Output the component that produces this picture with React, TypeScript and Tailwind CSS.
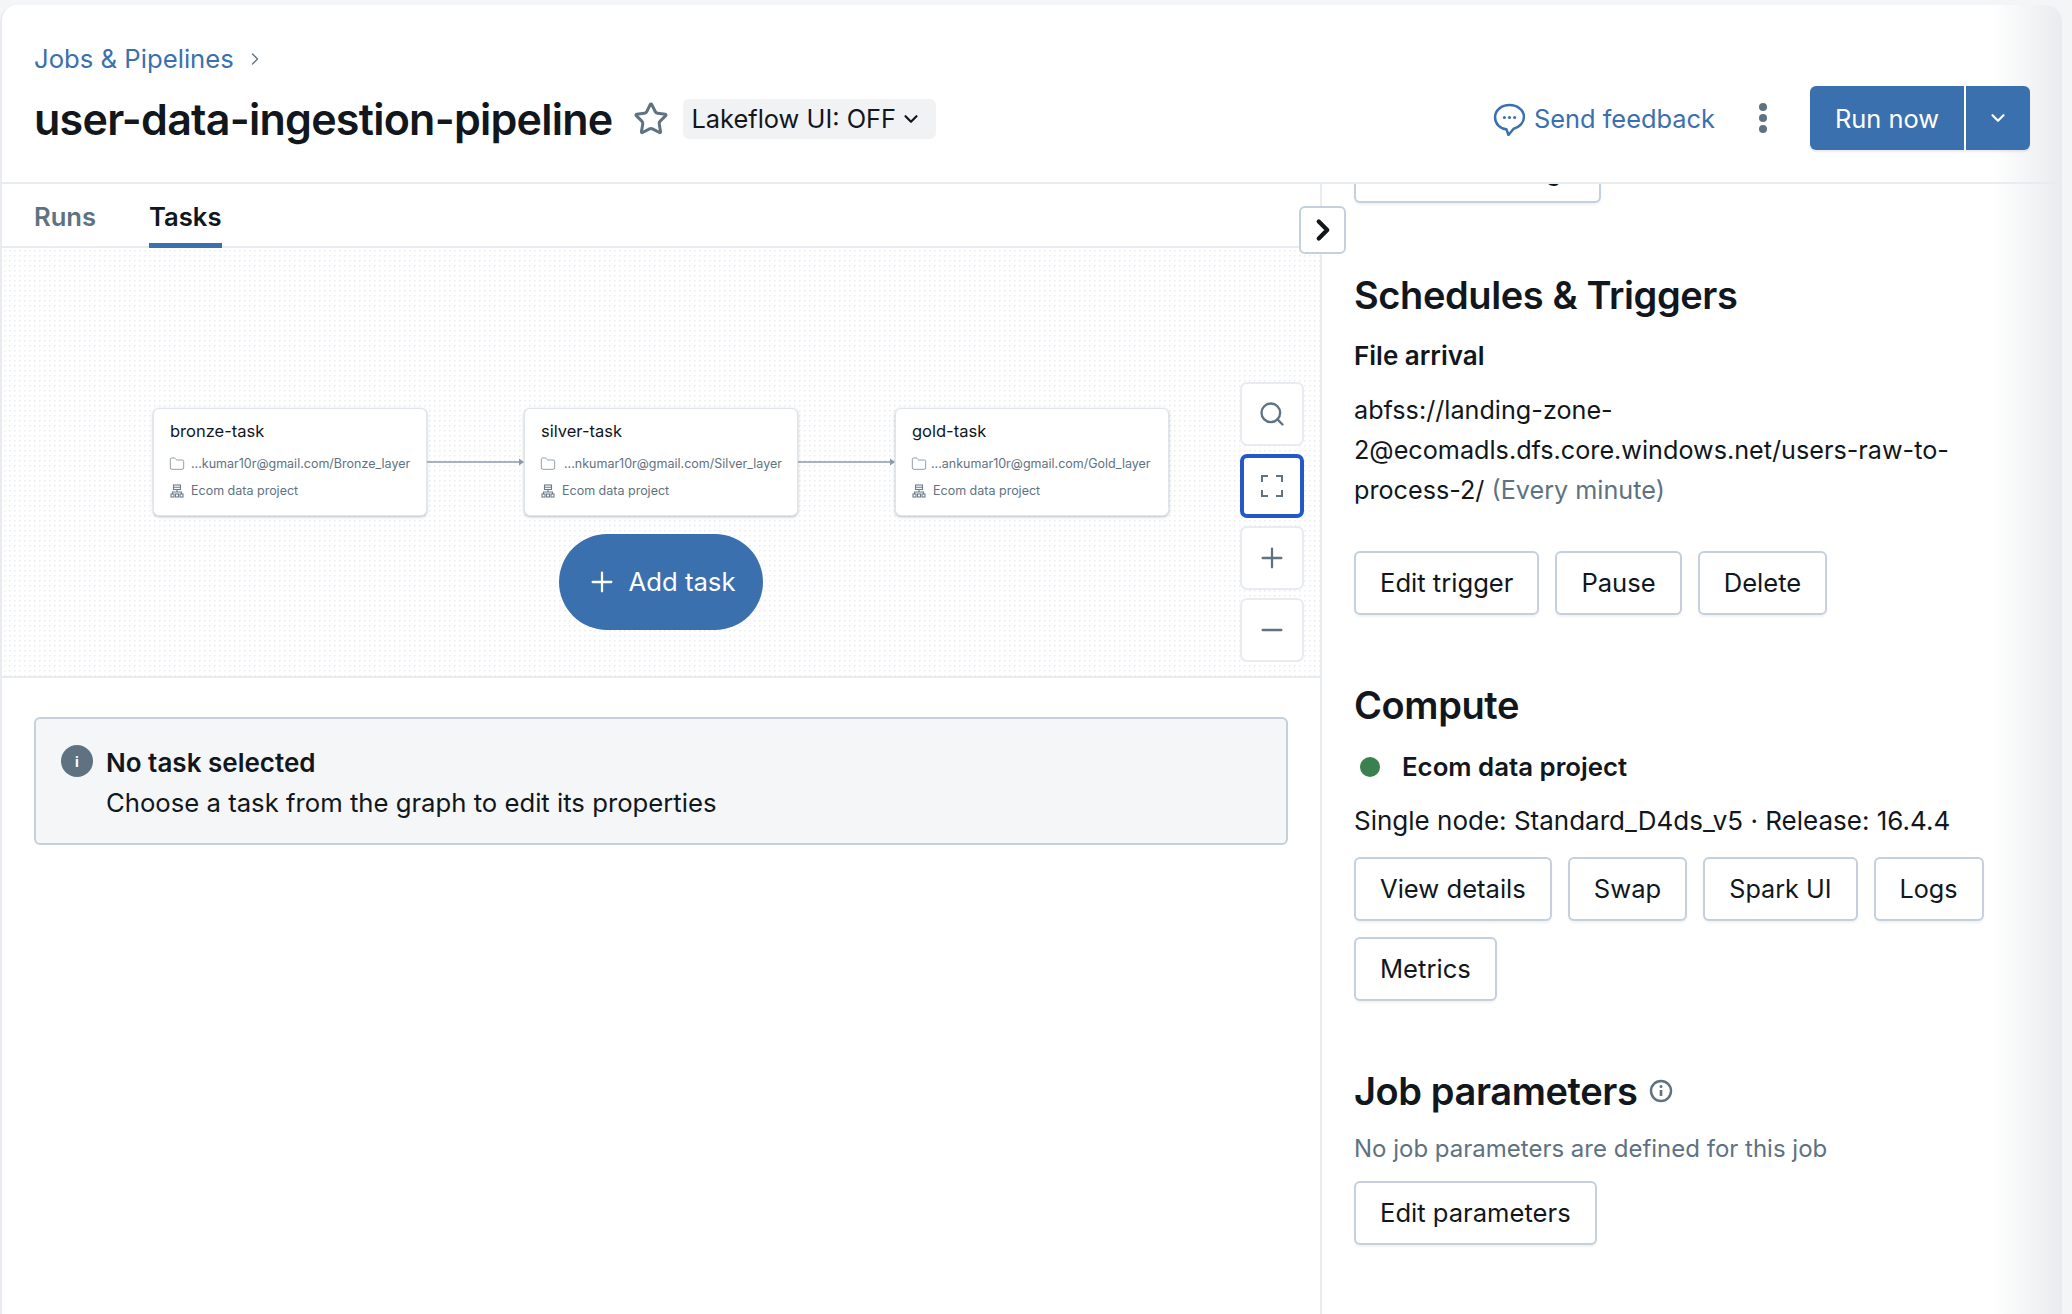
import React from "react";
import { ChevronRight, ChevronDown, Star, Folder, Plus, Minus, Search } from "lucide-react";

const Btn = ({ children, className = "" }: { children: React.ReactNode; className?: string }) => (
  <button className={"h-[64px] px-[24px] rounded-[6px] border-2 border-[#c4d0dc] bg-white text-[25.6px] leading-[30px] text-[#11171c] shadow-[0_2px_2px_rgba(0,0,0,0.05)] whitespace-nowrap " + className}>
    {children}
  </button>
);

const ClusterIcon = () => (
  <svg width="14" height="14" viewBox="0 0 14 14" fill="none" stroke="#6b7c8c" strokeWidth="1.1" className="shrink-0">
    <rect x="3.5" y="1" width="7" height="4.5" />
    <path d="M3.5 3.2h7M7 5.5v2.500M2.500 10V8h9v2" />
    <rect x="1" y="10" width="3" height="3" />
    <rect x="5.500" y="10" width="3" height="3" />
    <rect x="10" y="10" width="3" height="3" />
  </svg>
);

const TaskNode = ({ name, path, left, gap }: { name: string; path: string; left: number; gap: string }) => (
  <div
    className="absolute top-[160px] w-[274px] h-[108px] bg-white rounded-[6px] border border-[#dfe5ea] shadow-[0_1px_3px_rgba(95,114,129,0.45)] px-[16px] pt-[11px]"
    style={{ left }}
  >
    <div className="text-[16.5px] leading-[22px] text-[#11171c]">{name}</div>
    <div className={"flex items-center mt-[12px] h-[20px] -ml-[1px] " + gap}>
      <Folder size={16} strokeWidth={1.1} color="#6b7c8c" className="shrink-0" />
      <span className="text-[12.5px] text-[#5f7281] whitespace-nowrap">{path}</span>
    </div>
    <div className="flex items-center gap-[7px] mt-[7px] h-[20px]">
      <ClusterIcon />
      <span className="text-[12.5px] text-[#5f7281] whitespace-nowrap">Ecom data project</span>
    </div>
  </div>
);

const Arrow = ({ left }: { left: number }) => (
  <svg className="absolute top-[209px]" style={{ left }} width="98" height="10" viewBox="0 0 98 10">
    <path d="M0 5H94" stroke="#8a9bab" strokeWidth="1.5" />
    <path d="M92 1.500L97 5L92 8.500Z" fill="#8a9bab" />
  </svg>
);

const ZoomBtn = ({ children, active }: { children: React.ReactNode; active?: boolean }) => (
  <div
    className={
      "w-[64px] h-[64px] rounded-[7px] bg-white flex items-center justify-center " +
      (active ? "border-4 border-[#2458c6]" : "border-2 border-[#e8ecf0]")
    }
  >
    {children}
  </div>
);

export default function App() {
  return (
    <div className="relative w-[2072px] h-[1314px] overflow-hidden bg-[#f3f5f7] pt-[5px] font-['Inter',sans-serif] text-[#11171c]">
      <div className="relative h-[1309px] w-[2062px] bg-white rounded-t-[16px] flex flex-col overflow-hidden border-l-2 border-[#e8ecf0]">
        {/* Header */}
        <header className="h-[179px] shrink-0 border-b-2 border-[#e8ecf0] pl-[32px] pr-[32px] flex flex-col pt-[38px]">
          <div className="flex items-center gap-[11px] h-[32px] text-[25.7px] leading-[32px] text-[#3b70ae]">
            <span>Jobs &amp; Pipelines</span>
            <ChevronRight size={20} strokeWidth={1.6} color="#5f7281" />
          </div>
          <div className="flex items-center h-[64px] mt-[12px]">
            <h1 className="text-[43px] leading-[56px] font-semibold tracking-[-0.75px] text-[#11171c] whitespace-nowrap">user-data-ingestion-pipeline</h1>
            <Star size={36} strokeWidth={2} color="#5f7281" className="ml-[21px]" />
            <div className="ml-[14px] h-[40px] pl-[8px] pr-[14px] rounded-[6px] bg-[#f1f2f4] flex items-center gap-[4px] text-[25.4px] text-[#11171c] whitespace-nowrap">
              Lakeflow UI: OFF
              <ChevronDown size={22} strokeWidth={2.4} />
            </div>
            <div className="ml-auto flex items-center relative z-10">
              <svg width="33" height="33" viewBox="0 0 32 32" fill="none" className="mr-[8px]">
                <path d="M16 2C8.300 2 2 7 2 14c0 6.300 5 11 11 11.500L15 31l5-6c5.800-1.500 10-6 10-11.500C30 7 23.700 2 16 2Z" stroke="#3b70ae" strokeWidth="2.4" strokeLinejoin="round" />
                <circle cx="11" cy="14" r="1.500" fill="#3b70ae" />
                <circle cx="16" cy="14" r="1.500" fill="#3b70ae" />
                <circle cx="21" cy="14" r="1.500" fill="#3b70ae" />
              </svg>
              <span className="text-[25.4px] text-[#3b70ae] whitespace-nowrap">Send feedback</span>
              <svg width="10" height="30" viewBox="0 0 10 30" className="ml-[43px] mb-[2px]">
                <circle cx="5" cy="4" r="4" fill="#5f7281" />
                <circle cx="5" cy="15" r="4" fill="#5f7281" />
                <circle cx="5" cy="26" r="4" fill="#5f7281" />
              </svg>
              <div className="ml-[42px] mb-[2px] flex h-[64px] rounded-[6px] overflow-hidden bg-[#3b70ae] text-white shadow-[0_2px_2px_rgba(0,0,0,0.08)]">
                <div className="w-[156px] flex items-center justify-center pt-[2px] text-[25.4px] border-r-2 border-white">Run now</div>
                <div className="w-[64px] flex items-center justify-center"><ChevronDown size={22} strokeWidth={2.4} /></div>
              </div>
            </div>
          </div>
        </header>

        <div className="flex flex-1 min-h-0">
          {/* Left */}
          <div className="w-[1320px] shrink-0 border-r-2 border-[#e8ecf0] relative flex flex-col">
            <div className="h-[64px] shrink-0 flex gap-[53px] pl-[32px] border-b-2 border-[#e8ecf0] text-[25.6px] font-semibold">
              <div className="pt-[14px] text-[#5f7281]">Runs</div>
              <div className="pt-[14px] h-[64px] border-b-[5px] border-[#3b70ae] text-[#11171c]">Tasks</div>
            </div>
            <div className="relative h-[430px] shrink-0 border-b-2 border-[#e8ecf0] bg-[radial-gradient(#eef0f3_1px,transparent_1px)] bg-[size:5px_5px]">
              <TaskNode name="bronze-task" path="...kumar10r@gmail.com/Bronze_layer" left={151} gap="gap-[6px]" />
              <Arrow left={425} />
              <TaskNode name="silver-task" path="...nkumar10r@gmail.com/Silver_layer" left={522} gap="gap-[8px]" />
              <Arrow left={796} />
              <TaskNode name="gold-task" path="...ankumar10r@gmail.com/Gold_layer" left={893} gap="gap-[4px]" />
              <button className="absolute left-[557px] top-[286px] w-[204px] h-[96px] rounded-full bg-[#3b70ae] text-white text-[25.7px] flex items-center justify-center gap-[10px]">
                <Plus size={32} strokeWidth={1.7} />
                Add task
              </button>
              <div className="absolute left-[1238px] top-[134px] flex flex-col gap-[8px]">
                <ZoomBtn><Search size={28} strokeWidth={2} color="#5f7281" /></ZoomBtn>
                <ZoomBtn active>
                  <svg width="22" height="22" viewBox="0 0 22 22" fill="none" stroke="#5f7281" strokeWidth="2">
                    <path d="M1 7V1h6M15 1h6v6M21 15v6h-6M7 21H1v-6" />
                  </svg>
                </ZoomBtn>
                <ZoomBtn><Plus size={32} strokeWidth={1.7} color="#5f7281" /></ZoomBtn>
                <ZoomBtn><Minus size={32} strokeWidth={1.7} color="#5f7281" /></ZoomBtn>
              </div>
            </div>
            <div className="mx-[32px] mt-[39px] h-[128px] bg-[#f5f6f8] border-2 border-[#c4d0dc] rounded-[6px] flex pl-[25px] pt-[26px] gap-[13px]">
              <div className="w-[32px] h-[32px] rounded-full bg-[#5f7281] flex items-center justify-center text-white text-[14px] font-bold shrink-0">i</div>
              <div className="text-[25.7px] leading-[40px] -mt-[2px]">
                <div className="font-semibold text-[26px]">No task selected</div>
                <div>Choose a task from the graph to edit its properties</div>
              </div>
            </div>
            <button className="absolute left-[1297px] top-[22px] w-[47px] h-[48px] bg-white rounded-[6px] border-2 border-[#c4d0dc] flex items-center justify-center z-10">
              <ChevronRight size={34} strokeWidth={3} color="#11171c" />
            </button>
          </div>

          {/* Right */}
          <div className="flex-1 min-w-0 overflow-hidden pl-[32px] relative">
            <Btn className="block -mt-[45px] w-[247px] !px-0">Edit run settings</Btn>
            <h2 className="mt-[68px] text-[38px] leading-[48px] font-semibold tracking-[-0.4px]">Schedules &amp; Triggers</h2>
            <div className="mt-[19px] text-[26px] leading-[36px] font-semibold">File arrival</div>
            <p className="mt-[16px] text-[25.2px] leading-[40px] w-[640px]">
              abfss://landing-zone-2@ecomadls.dfs.core.windows.net/users-raw-to-process-2/ <span className="text-[#5f7281]">(Every minute)</span>
            </p>
            <div className="flex gap-[16px] mt-[41px]">
              <Btn>Edit trigger</Btn>
              <Btn>Pause</Btn>
              <Btn>Delete</Btn>
            </div>
            <h2 className="mt-[66px] text-[38px] leading-[48px] font-semibold tracking-[-0.4px]">Compute</h2>
            <div className="flex items-center mt-[20px] h-[36px] pl-[6px]">
              <span className="w-[20px] h-[20px] rounded-full bg-[#3b8050]" />
              <span className="ml-[22px] text-[25.8px] font-semibold">Ecom data project</span>
            </div>
            <div className="mt-[18px] text-[26px] leading-[36px]">Single node: Standard_D4ds_v5 · Release: 16.4.4</div>
            <div className="flex flex-wrap gap-x-[16px] gap-y-[16px] mt-[18px] w-[660px]">
              <Btn>View details</Btn>
              <Btn>Swap</Btn>
              <Btn className="!text-[25.2px]">Spark UI</Btn>
              <Btn className="!text-[25.2px]">Logs</Btn>
              <Btn>Metrics</Btn>
            </div>
            <div className="flex items-center gap-[12px] mt-[66px]">
              <h2 className="text-[38px] leading-[48px] font-semibold tracking-[-0.4px]">Job parameters</h2>
              <svg width="24" height="24" viewBox="0 0 24 24" fill="none">
                <circle cx="12" cy="12" r="10" stroke="#5f7281" strokeWidth="2.4" />
                <circle cx="12" cy="7.500" r="1.500" fill="#5f7281" />
                <path d="M12 11v6" stroke="#5f7281" strokeWidth="2.600" />
              </svg>
            </div>
            <div className="mt-[16px] text-[24px] leading-[36px] text-[#5f7281]">No job parameters are defined for this job</div>
            <Btn className="mt-[14px] block">Edit parameters</Btn>
          </div>
        </div>
        <div className="absolute right-0 top-0 bottom-0 w-[70px] bg-gradient-to-r from-transparent to-[#e9ebee] pointer-events-none" />
      </div>
    </div>
  );
}
